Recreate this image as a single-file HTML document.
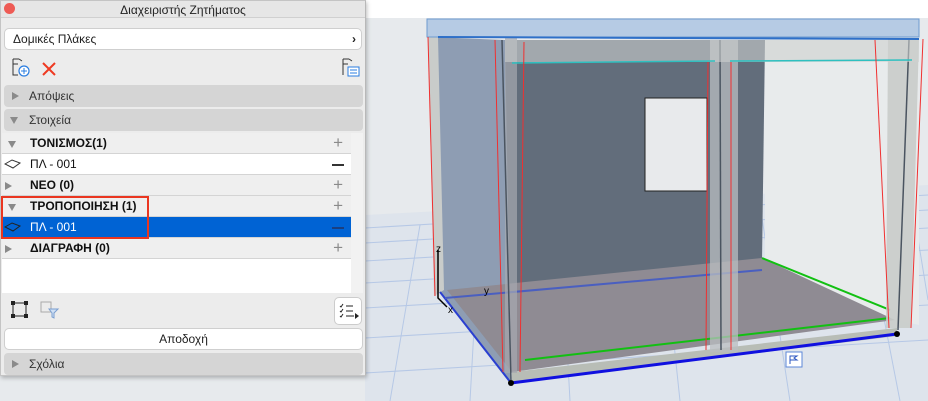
<!DOCTYPE html>
<html><head><meta charset="utf-8"><style>
*{margin:0;padding:0;box-sizing:border-box}
body{width:928px;height:401px;overflow:hidden;background:#fff;font-family:"Liberation Sans","DejaVu Sans",sans-serif;position:relative}
.abs{position:absolute}
#panel{left:0;top:0;width:366px;height:376px;background:#ececec;border:1px solid #c4c4c4;border-right:1px solid #b8b8b8;box-shadow:1px 2px 4px rgba(0,0,0,.25)}
.t{font-size:12px;color:#222}
.bar{left:3px;width:359px;height:22px;background:#d5d5d5;border-radius:4px;font-size:12px;color:#333;line-height:22px;padding-left:25px}
.tri{position:absolute;left:8px;top:7px;width:0;height:0;border-top:4px solid transparent;border-bottom:4px solid transparent;border-left:7px solid #8a8a8a}
.trid{position:absolute;left:6px;top:8px;width:0;height:0;border-left:4px solid transparent;border-right:4px solid transparent;border-top:7px solid #8a8a8a}
.row{left:1px;width:349px;height:21px;font-size:12px;line-height:20px;border-bottom:1px solid #d4d4d4}
.g{background:#efefef;font-weight:bold;color:#111;padding-left:28px}
.w{background:#fff;color:#111;padding-left:28px}
.pl{position:absolute;right:8px;top:0;font-size:17px;color:#8a8a8a;font-weight:normal;line-height:20px}
.mi{position:absolute;right:7px;top:10px;width:12px;height:2px;background:#333}
</style></head><body>
<svg class="abs" style="left:0;top:0" width="928" height="401" viewBox="0 0 928 401">
<rect x="0" y="0" width="928" height="18" fill="#fff"/>
<rect x="0" y="18" width="928" height="383" fill="#e7eaed"/>
<polygon points="365,215 928,185 928,401 365,401" fill="#dee4ec"/>
<g stroke="#b6c8e6" stroke-width="1" fill="none">
<line x1="365" y1="228" x2="928" y2="195"/><line x1="365" y1="243" x2="928" y2="210"/><line x1="365" y1="261" x2="928" y2="228"/><line x1="365" y1="283" x2="928" y2="250"/><line x1="365" y1="308" x2="928" y2="275"/><line x1="365" y1="338" x2="928" y2="305"/><line x1="365" y1="373" x2="928" y2="340"/>
<line x1="390" y1="401" x2="420" y2="225"/><line x1="470" y1="401" x2="480" y2="220"/><line x1="570" y1="401" x2="560" y2="215"/><line x1="680" y1="401" x2="660" y2="210"/><line x1="790" y1="401" x2="760" y2="205"/><line x1="900" y1="401" x2="860" y2="195"/><line x1="928" y1="300" x2="910" y2="190"/>
</g>
<polygon points="505,40 765,40 762,262 505,290" fill="#626d7b"/>
<polygon points="765,40 919,40 919,325 888,318 765,262" fill="#e8ebec"/>
<polygon points="430,37 505,40 511,383 440,292" fill="#8e9db3"/>
<polygon points="428,37 438,37 444,290 434,296" fill="#c9ccca"/>
<rect x="645" y="98" width="62" height="93" fill="#e8eaec" stroke="#222" stroke-width="1"/>
<polygon points="447,290 762,258 895,320 512,372" fill="#8f8b93"/>
<polygon points="512,372 897,328 897,336 512,383" fill="#b8bdb6"/>
<line x1="511" y1="383" x2="897" y2="334" stroke="#1010e0" stroke-width="3"/>
<line x1="440" y1="292" x2="511" y2="383" stroke="#2a3fd0" stroke-width="2"/>
<line x1="445" y1="298" x2="762" y2="270" stroke="#4a5fc0" stroke-width="2"/>
<line x1="525" y1="360" x2="890" y2="318" stroke="#12c012" stroke-width="2"/>
<line x1="762" y1="258" x2="890" y2="310" stroke="#12c012" stroke-width="2"/>
<rect x="505" y="38" width="12" height="335" fill="#a6aab0" opacity=".7"/>
<rect x="710" y="40" width="28" height="312" fill="#b9bdc0" opacity=".75"/>
<line x1="720" y1="40" x2="721" y2="350" stroke="#4a5460" stroke-width="1.5"/>
<polygon points="888,38 919,38 911,328 886,328" fill="#c9ccca" opacity=".9"/>
<line x1="909" y1="40" x2="898" y2="330" stroke="#4a5460" stroke-width="1.5"/>
<line x1="502" y1="40" x2="511" y2="380" stroke="#4a5460" stroke-width="1.5"/>
<rect x="505" y="40" width="414" height="22" fill="#cdd0cf" opacity=".6"/>
<line x1="512" y1="63" x2="715" y2="61" stroke="#2ec0c0" stroke-width="1.5"/>
<line x1="730" y1="61" x2="912" y2="60" stroke="#2ec0c0" stroke-width="1.5"/>
<rect x="427" y="19" width="492" height="18" fill="#b6cbe4" stroke="#6d9bd0"/>
<line x1="438" y1="37" x2="919" y2="39" stroke="#2f70c8" stroke-width="2"/>
<g stroke="#f03030" stroke-width="1" fill="none"><line x1="428" y1="37" x2="435" y2="296"/><line x1="495" y1="40" x2="503" y2="372"/><line x1="524" y1="42" x2="520" y2="372"/><line x1="708" y1="62" x2="706" y2="350"/><line x1="731" y1="62" x2="731" y2="350"/><line x1="875" y1="40" x2="889" y2="328"/><line x1="923" y1="39" x2="911" y2="328"/></g>
<circle cx="511" cy="383" r="3" fill="#000"/><circle cx="897" cy="334" r="3" fill="#000"/>
<path d="M438 250V298L447 307" stroke="#000" stroke-width="1.5" fill="none"/>
<text x="436" y="252" font-size="10" font-family="Liberation Sans">z</text>
<text x="484" y="294" font-size="10" font-family="Liberation Sans">y</text>
<text x="448" y="313" font-size="10" font-family="Liberation Sans">x</text>
<rect x="786" y="352" width="16" height="15" fill="#fff" stroke="#5c87d8"/>
<path d="M790 364V356H797L794 358L797 360H790" stroke="#2a55c0" fill="none"/>
</svg>

<div id="panel" class="abs">
<div class="abs" style="left:0;top:0;width:364px;height:17px;background:#e6e6e6;border-bottom:1px solid #d0d0d0"></div>
<div class="abs" style="left:3px;top:2px;width:11px;height:11px;border-radius:50%;background:#ee5b55"></div>
<div class="abs t" style="left:0;top:2px;width:364px;text-align:center;font-size:12px">Διαχειριστής Ζητήματος</div>
<div class="abs" style="left:3px;top:27px;width:358px;height:22px;background:#fff;border:1px solid #cfcfcf;border-radius:5px;font-size:12px;line-height:20px;padding-left:8px;color:#222">Δομικές Πλάκες<span style="position:absolute;right:5px;font-weight:bold">›</span></div>
<svg class="abs" style="left:10px;top:57px" width="20" height="20"><path d="M2 1V17H7M2 1H8M2 6H7" stroke="#333" fill="none"/><path d="M8 1L11 3" stroke="#333"/><circle cx="13" cy="13" r="5" fill="#fff" stroke="#2a7de0" stroke-width="1.2"/><path d="M10 13H16M13 10V16" stroke="#2a7de0"/></svg>
<svg class="abs" style="left:40px;top:60px" width="16" height="16"><path d="M2 2L14 14M14 2L2 14" stroke="#ee3a22" stroke-width="2"/></svg>
<svg class="abs" style="left:340px;top:57px" width="20" height="20"><path d="M2 1V17M2 1H8M2 6H7" stroke="#333" fill="none"/><path d="M8 1L11 3" stroke="#333"/><rect x="7" y="9" width="11" height="9" fill="#fff" stroke="#2a7de0"/><path d="M9 12H16M9 15H16" stroke="#2a7de0"/></svg>
<div class="abs bar" style="top:84px"><span class="tri"></span>Απόψεις</div>
<div class="abs bar" style="top:108px"><span class="trid"></span>Στοιχεία</div>
<div class="abs" style="left:1px;top:132px;width:349px;height:160px;background:#fff"></div>
<div class="abs" style="left:350px;top:132px;width:12px;height:160px;background:#f2f2f2"></div>
<div class="abs row g" style="top:132px"><span class="trid"></span>ΤΟΝΙΣΜΟΣ(1)<span class="pl">+</span></div>
<div class="abs row w" style="top:153px">ΠΛ - 001<span class="mi"></span></div>
<div class="abs row g" style="top:174px"><span class="tri" style="left:3px"></span>ΝΕΟ (0)<span class="pl">+</span></div>
<div class="abs row g" style="top:195px"><span class="trid"></span>ΤΡΟΠΟΠΟΙΗΣΗ (1)<span class="pl">+</span></div>
<div class="abs row w" style="top:216px;background:#0063d4;color:#fff">ΠΛ - 001<span class="mi" style="background:#1a3f80"></span></div>
<div class="abs row g" style="top:237px"><span class="tri" style="left:3px"></span>ΔΙΑΓΡΑΦΗ (0)<span class="pl">+</span></div>
<svg class="abs" style="left:3px;top:157px" width="18" height="12"><path d="M1 6L8 2L16 5L9 10Z" stroke="#333" fill="none"/></svg>
<svg class="abs" style="left:3px;top:220px" width="18" height="12"><path d="M1 6L8 2L16 5L9 10Z" stroke="#222" fill="none"/></svg>
<div class="abs" style="left:0;top:195px;width:148px;height:43px;border:2px solid #ea3620"></div>
<svg class="abs" style="left:10px;top:300px" width="18" height="18"><rect x="2" y="2" width="13" height="13" fill="none" stroke="#222"/><rect x="0" y="0" width="4" height="4" fill="#222"/><rect x="13" y="0" width="4" height="4" fill="#222"/><rect x="0" y="13" width="4" height="4" fill="#222"/><rect x="13" y="13" width="4" height="4" fill="#222"/></svg>
<svg class="abs" style="left:39px;top:299px" width="20" height="20"><rect x="1" y="2" width="10" height="10" fill="none" stroke="#aaa"/><path d="M9 9H18L14 13V18L12 17V13Z" fill="#cfe0f5" stroke="#7a9ed0"/></svg>
<div class="abs" style="left:333px;top:296px;width:28px;height:28px;background:#fff;border:1px solid #ccc;border-radius:5px"></div>
<svg class="abs" style="left:338px;top:302px" width="20" height="18"><path d="M1 3L2 4L4 1M1 8L2 9L4 6M1 13L2 14L4 11" stroke="#222" fill="none"/><path d="M7 3H14M7 8H14M7 13H15" stroke="#222"/><path d="M16 10L20 13L16 16Z" fill="#222"/></svg>
<div class="abs" style="left:3px;top:327px;width:359px;height:22px;background:#fff;border:1px solid #cfcfcf;border-radius:5px;text-align:center;font-size:12px;line-height:20px;color:#222">Αποδοχή</div>
<div class="abs bar" style="top:352px"><span class="tri"></span>Σχόλια</div>
</div>
</body></html>
